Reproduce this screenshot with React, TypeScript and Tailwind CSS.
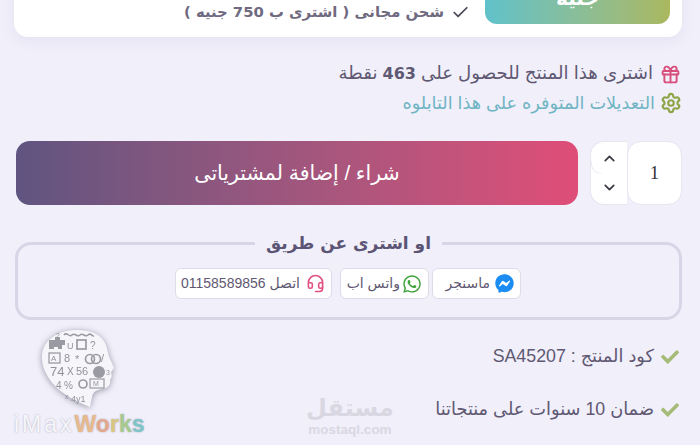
import { Check, ChevronDown, ChevronUp, Gift, Headset, Settings } from "lucide-react";
import { FaCheck, FaFacebookMessenger, FaWhatsapp } from "react-icons/fa";

const headGlyphs = [
  { t: "2", x: 16, y: 13, s: 7 },
  { t: "U", x: 27, y: 24, s: 9 },
  { t: "?", x: 50, y: 24, s: 10 },
  { t: "A", x: 11, y: 36, s: 8 },
  { t: "8", x: 24, y: 37, s: 11 },
  { t: "*", x: 35, y: 38, s: 11 },
  { t: "/", x: 61, y: 37, s: 11 },
  { t: "74", x: 10, y: 51, s: 13 },
  { t: "X", x: 27, y: 50, s: 10 },
  { t: "56", x: 36, y: 50, s: 11 },
  { t: "3", x: 66, y: 50, s: 7 },
  { t: "4", x: 16, y: 64, s: 10 },
  { t: "%", x: 24, y: 64, s: 10 },
  { t: "M", x: 53, y: 61, s: 7 },
  { t: "x", x: 25, y: 74, s: 7 },
  { t: "4y1", x: 31, y: 77, s: 9 },
];

function HeadLogo() {
  return (
    <svg width="76" height="88" viewBox="0 0 76 88" className="drop-shadow-[0_1px_3px_rgba(90,90,110,0.6)] blur-[0.3px]">
      <path
        d="M2 32C2 15 18 5 37 5c15 0 25 5 29 15 2 6 2 10 5 16l3 7-3 4c1 3 1 6-1 8 1 5-2 8-8 9-6 1-9 3-10 8l-2 10C34 76 16 66 8 52 4 45 2 40 2 32z"
        fill="#f6f6fa"
      />
      {headGlyphs.map((g, i) => (
        <text key={i} x={g.x} y={g.y} fontSize={g.s} fill="#92929b" fontFamily="'Liberation Sans', sans-serif">
          {g.t}
        </text>
      ))}
      <path d="M24 10c3-4 5 3 8 0s5 3 8 0 5 3 8 0 4 2 6 1" fill="none" stroke="#9a9aa2" strokeWidth="1.5" />
      <path d="M9 15h6v-3h5v3h5v5h-3v4h-4v-2h-4v2H9z" fill="#9a9aa2" />
      <rect x="9" y="28" width="11" height="10" fill="none" stroke="#9a9aa2" strokeWidth="1.3" />
      <rect x="37" y="15" width="9" height="9" fill="none" stroke="#9a9aa2" strokeWidth="1.7" />
      <circle cx="50" cy="34" r="4.5" fill="none" stroke="#9a9aa2" strokeWidth="1.7" />
      <circle cx="56" cy="34" r="4.5" fill="none" stroke="#9a9aa2" strokeWidth="1.7" />
      <circle cx="59" cy="47" r="6" fill="#9a9aa2" />
      <circle cx="43" cy="59" r="4" fill="none" stroke="#9a9aa2" strokeWidth="1.7" />
      <rect x="50" y="54" width="14" height="9" fill="none" stroke="#9a9aa2" strokeWidth="1.2" />
    </svg>
  );
}

export default function App() {
  return (
    <div
      dir="rtl"
      className="relative h-[445px] w-[700px] overflow-hidden bg-[#f0effa] pl-[15px] pr-[18px] font-['Liberation_Sans','DejaVu_Sans',sans-serif] text-[#5f5872]"
    >
      {/* Price card, cut by the top of the window */}
      <div className="mt-[-30px] -ml-px flex h-[67px] items-start gap-[15px] rounded-[14px] bg-white pr-[12px] shadow-[0_4px_14px_rgba(90,85,130,0.08)]">
        <button
          type="button"
          className="flex h-[54px] w-[185px] items-end justify-center rounded-[12px] bg-gradient-to-l from-[#aab85e] to-[#5fc1ca] pb-[11px] text-[20px] font-bold text-white"
        >
          جنيه
        </button>
        <div className="mt-[31px] flex items-center gap-[7px] font-['DejaVu_Sans',sans-serif] text-[14.8px] font-bold text-[#6f6a80]">
          <Check size={19} strokeWidth={2.2} className="text-[#4b4a58]" />
          <span>شحن مجانى ( اشترى ب 750 جنيه )</span>
        </div>
      </div>

      <div className="mt-[26px] flex h-[22px] items-center gap-[7px] pr-px text-[18.2px]">
        <Gift size={21} strokeWidth={2.2} className="text-[#d94f7c]" />
        <span>
          اشترى هذا المنتج للحصول على <b className="font-['DejaVu_Sans',sans-serif] text-[16px] font-bold">463</b> نقطة
        </span>
      </div>
      <div className="mt-[7px] flex h-[22px] items-center gap-[5px] text-[17.7px] text-[#6fb4c3]">
        <Settings size={22} strokeWidth={2.4} className="text-[#8ea548]" />
        <span>التعديلات المتوفره على هذا التابلوه</span>
      </div>

      {/* Quantity and buy */}
      <div className="mt-[27px] flex h-[64px] items-stretch">
        <div className="flex w-[55px] items-center justify-center rounded-[14px] border border-[#e6e5f0] bg-white font-['Liberation_Serif',serif] text-[19px] text-[#33323c]">
          1
        </div>
        <div className="relative flex w-[37px] flex-col items-center justify-center gap-[12px] rounded-l-[14px] border border-r-0 border-[#e6e5f0] bg-white text-[#3b3a44]">
          <ChevronUp size={17} strokeWidth={2.4} />
          <ChevronDown size={17} strokeWidth={2.4} />
          <span className="absolute left-0 top-[19px] h-[13px] w-[10px] rounded-bl-[10px] border-b border-l border-[#ecebf3]" />
        </div>
        <button
          type="button"
          className="mr-[12px] w-[562px] rounded-[14px] bg-gradient-to-r from-[#5f5480] to-[#df4d78] text-[20.5px] text-white"
        >
          شراء / إضافة لمشترياتى
        </button>
      </div>

      {/* Other ways to buy */}
      <fieldset className="mt-[28px] h-[87px] rounded-[16px] border-[3px] border-[#d8d6e6]">
        <legend className="mx-auto px-[11px] font-['DejaVu_Sans',sans-serif] text-[17px] font-bold leading-[21px] text-[#5c5475]">
          او اشترى عن طريق
        </legend>
        <div className="mt-[14px] flex justify-start gap-[3px] pr-[158px] text-[14px] text-[#5f5872]">
          <div className="flex h-[31px] w-[89px] items-center gap-[5px] rounded-[6px] border border-[#dddcea] bg-white pr-[6px] whitespace-nowrap">
            <FaFacebookMessenger size={19} className="text-[#1b8cf2]" />
            <span>ماسنجر</span>
          </div>
          <div className="flex h-[31px] w-[89px] items-center gap-[2px] rounded-[6px] border border-[#dddcea] bg-white pr-[6px] whitespace-nowrap">
            <FaWhatsapp size={20} className="text-[#3fa33a]" />
            <span>واتس اب</span>
          </div>
          <div className="mr-[5px] flex h-[31px] w-[157px] items-center gap-[6px] rounded-[6px] border border-[#dddcea] bg-white pr-[6px] whitespace-nowrap">
            <Headset size={19} className="shrink-0 text-[#e0527f]" />
            <span>اتصل 01158589856</span>
          </div>
        </div>
      </fieldset>

      <ul className="mt-[27px] flex flex-col gap-[34px] pr-[3px] text-[17.8px]">
        <li className="flex h-[19px] items-center gap-[7px]">
          <FaCheck size={18} className="text-[#a6bb78]" />
          <span>كود المنتج : SA45207</span>
        </li>
        <li className="flex h-[19px] items-center gap-[7px]">
          <FaCheck size={18} className="text-[#a6bb78]" />
          <span>ضمان 10 سنوات على منتجاتنا</span>
        </li>
      </ul>

      {/* Watermarks lying over the page */}
      <div dir="ltr" className="absolute left-[14px] top-[325px] flex w-[134px] flex-col items-start">
        <div className="ml-[26px]">
          <HeadLogo />
        </div>
        <div className="mt-[-1px] font-['Liberation_Sans',sans-serif] text-[23px] leading-[24px] [text-shadow:0_0_2px_rgba(120,120,140,0.55)]">
          <span className="tracking-[3px] text-[#f6f6fa]">iMax</span>
          <span className="font-bold text-[#e8b98c]">W</span>
          <span className="font-bold text-[#e3a88c]">o</span>
          <span className="font-bold text-[#d9c77f]">r</span>
          <span className="font-bold text-[#a6c98e]">k</span>
          <span className="font-bold text-[#7ec4c8]">s</span>
        </div>
      </div>
      <div className="absolute left-[308px] top-[393px] flex w-[84px] flex-col items-center text-[#d9d8e2]">
        <span className="font-['DejaVu_Sans',sans-serif] text-[24px] font-bold leading-[30px]">مستقل</span>
        <span dir="ltr" className="font-['Liberation_Sans',sans-serif] text-[13.5px] font-bold leading-[14px]">
          mostaql.com
        </span>
      </div>
    </div>
  );
}
